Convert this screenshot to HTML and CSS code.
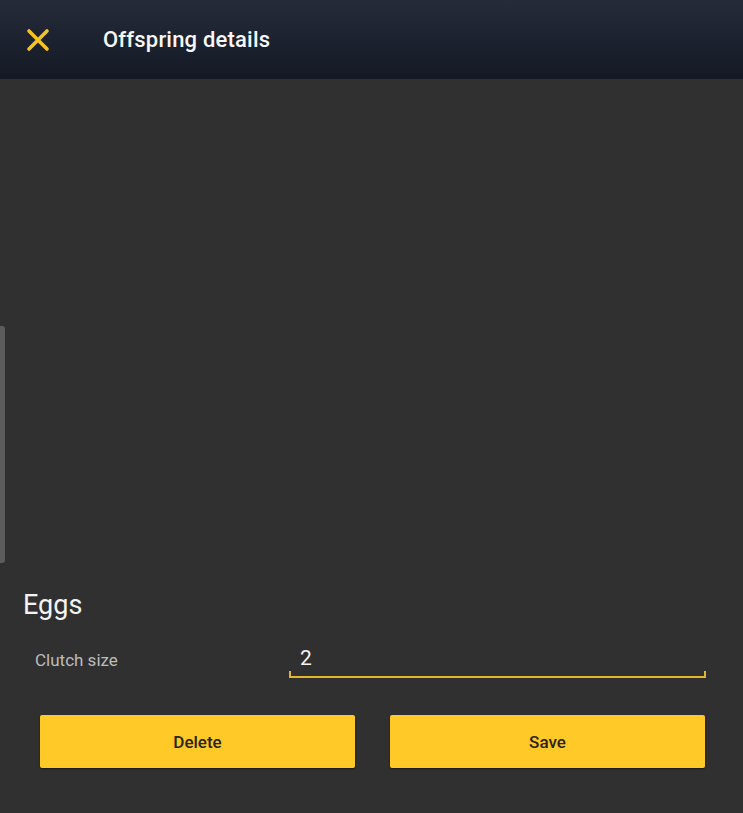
FILE: index.html
```html
<!DOCTYPE html>
<html lang="en">

<head>
    <meta charset="UTF-8">
    <meta name="viewport" content="width=device-width, initial-scale=1.0">
    <title>Offspring details</title>
    <link rel="stylesheet" href="styles.css">
</head>

<body>
    <div class="toolbar">
        <a href="#" class="close-button" aria-label="Close">
            <svg width="24" height="24" viewBox="0 0 24 24">
                <path d="M3 3 L21 21 M21 3 L3 21" stroke="#f6c422" stroke-width="3.6" stroke-linecap="round" fill="none"/>
            </svg>
        </a>
        <div class="toolbar-title">Offspring details</div>
    </div>

    <div class="content">
        <div class="scroll-thumb"></div>

        <div class="section">
            <h2>Eggs</h2>
            <div class="form-row">
                <label for="clutchSize">Clutch size</label>
                <div class="field">
                    <input type="text" id="clutchSize" name="clutchSize" value="2">
                </div>
            </div>
        </div>

        <div class="actions">
            <button type="button" class="action-button">Delete</button>
            <button type="button" class="action-button">Save</button>
        </div>
    </div>
</body>

</html>
```

FILE: styles.css
```css
body {
    font-family: Roboto, "Noto Sans", sans-serif;
    background-color: #303030;
    color: #fff;
    margin: 0;
    padding: 0;
    height: 813px;
    overflow: hidden;
}

.toolbar {
    display: flex;
    align-items: center;
    height: 79px;
    background: linear-gradient(180deg, #252b39, #141925);
}

.close-button {
    display: flex;
    align-items: center;
    justify-content: center;
    width: 24px;
    height: 24px;
    margin-left: 26px;
    margin-right: 53px;
}

.toolbar-title {
    font-size: 22px;
    font-weight: 500;
    letter-spacing: 0.2px;
    color: #f7f7f7;
}

.content {
    position: relative;
    display: flex;
    flex-direction: column;
    height: 734px;
}

.scroll-thumb {
    position: absolute;
    left: 0;
    top: 247px;
    width: 5px;
    height: 237px;
    background: #5c5c5c;
    border-radius: 0 3px 3px 0;
}

.section {
    margin-top: 508px;
    padding: 0 37px 0 23px;
}

.section h2 {
    font-size: 27px;
    font-weight: 400;
    color: #f4f4f4;
    margin: 0;
    line-height: 36px;
}

.form-row {
    display: flex;
    align-items: center;
    margin-top: 18px;
    padding-left: 12px;
}

.form-row label {
    width: 254px;
    font-size: 17px;
    color: #bdbdbd;
}

.field {
    flex: 1;
    position: relative;
    border-bottom: 2px solid #e2b62c;
}

.field::before,
.field::after {
    content: "";
    position: absolute;
    bottom: 0;
    width: 2px;
    height: 5px;
    background: #e2b62c;
}

.field::before {
    left: 0;
}

.field::after {
    right: 0;
}

.field input {
    width: 100%;
    box-sizing: border-box;
    background: transparent;
    border: none;
    outline: none;
    color: #f4f4f4;
    font-family: Roboto, "Noto Sans", sans-serif;
    font-size: 21px;
    padding: 5px 11px 6px;
}

.actions {
    display: flex;
    gap: 35px;
    padding: 0 38px 0 40px;
    margin-top: 37px;
}

.action-button {
    flex: 1;
    height: 53px;
    background-color: #ffca28;
    color: #2a2410;
    border: none;
    border-radius: 2px;
    box-shadow: 0 1px 2px rgba(0, 0, 0, 0.5);
    font-family: Roboto, "Noto Sans", sans-serif;
    font-size: 17px;
    font-weight: 500;
    cursor: pointer;
}
```
